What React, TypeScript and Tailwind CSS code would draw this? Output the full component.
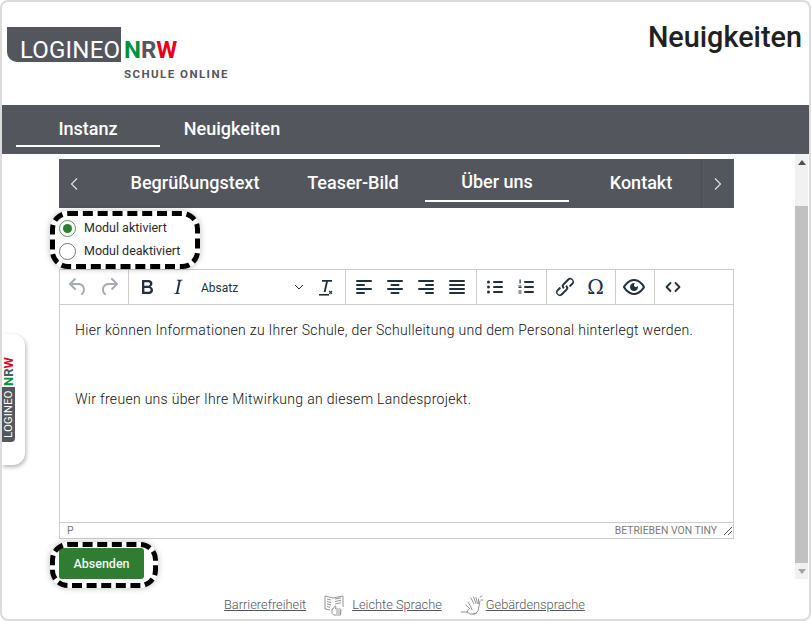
const INK = '#222f3e'

function Glyph({ d, className = '' }: { d: string; className?: string }) {
  return (
    <svg viewBox="0 0 24 24" className={`h-6 w-6 ${className}`} fill="currentColor">
      <path d={d} />
    </svg>
  )
}

function Lines({ rows }: { rows: [number, number][] }) {
  return (
    <svg viewBox="0 0 24 24" className="h-6 w-6" fill={INK}>
      {rows.map(([x, w], i) => (
        <rect key={i} x={x} y={5 + i * 4} width={w} height={2} rx={1} />
      ))}
    </svg>
  )
}

const icons = {
  undo: 'M6.4 8H12c3.7 0 6.2 2 6.8 5.1.6 2.7-.4 5.6-2.3 6.8a1 1 0 0 1-1-1.8c1.1-.6 1.8-2.7 1.4-4.6-.5-2.1-2.1-3.5-4.9-3.5H6.4l3.3 3.3a1 1 0 1 1-1.4 1.4l-5-5a1 1 0 0 1 0-1.4l5-5a1 1 0 0 1 1.4 1.4L6.4 8z',
  redo: 'M17.6 10H12c-2.8 0-4.4 1.4-4.9 3.5-.4 2 .3 4 1.4 4.6a1 1 0 1 1-1 1.8c-2-1.2-2.9-4.1-2.3-6.8.6-3 3-5.1 6.8-5.1h5.6l-3.3-3.3a1 1 0 1 1 1.4-1.4l5 5a1 1 0 0 1 0 1.4l-5 5a1 1 0 0 1-1.4-1.4l3.3-3.3z',
  bold: 'M7.8 19c-.3 0-.5 0-.6-.2l-.2-.5V5.7c0-.2 0-.4.2-.5l.6-.2h5c1.5 0 2.7.3 3.5 1 .7.6 1.1 1.4 1.1 2.5a3 3 0 0 1-.6 1.9c-.4.6-1 1-1.6 1.2.4.1.9.3 1.3.6s.8.7 1 1.2c.4.4.5 1 .5 1.6 0 1.3-.4 2.3-1.3 3-.8.7-2.1 1-3.8 1H7.8zm5-8.3c.6 0 1.2-.1 1.6-.5.4-.3.6-.7.6-1.3 0-1.1-.8-1.7-2.3-1.7H9.3v3.5h3.4zm.5 6c.7 0 1.3-.1 1.7-.4.4-.4.6-.9.6-1.5s-.2-1-.7-1.4c-.4-.3-1-.4-2-.4H9.4v3.8h4z',
  italic: 'M16.7 4.7l-.1.9h-.3c-.6 0-1 0-1.4.3-.3.3-.4.6-.5 1.1l-2.1 9.8v.6c0 .5.4.8 1.4.8h.2l-.2.8H8l.2-.8h.2c1.1 0 1.8-.5 2-1.5l2-9.8.1-.5c0-.6-.4-.8-1.4-.8h-.3l.2-.9h5.8z',
  link: 'M6.2 12.3a1 1 0 0 1 1.4 1.4l-2 2a2 2 0 1 0 2.6 2.8l4.8-4.8a1 1 0 0 0 0-1.4 1 1 0 1 1 1.4-1.3 2.9 2.9 0 0 1 0 4L9.6 20a3.9 3.9 0 0 1-5.5-5.5l2-2zm11.6-.6a1 1 0 0 1-1.4-1.4l2-2a2 2 0 1 0-2.6-2.8L11 10.3a1 1 0 0 0 0 1.4 1 1 0 1 1-1.4 1.3 2.9 2.9 0 0 1 0-4L14.4 4a3.9 3.9 0 0 1 5.5 5.5l-2 2z',
  eye: 'M3.5 12.5c.5.8 1.1 1.6 1.8 2.3 2 2 4.2 3.2 6.7 3.2s4.7-1.2 6.7-3.2a16.2 16.2 0 0 0 2.1-2.8 15.7 15.7 0 0 0-2.1-2.8c-2-2-4.2-3.2-6.7-3.2a9.3 9.3 0 0 0-6.7 3.2A16.2 16.2 0 0 0 3.2 12c0 .2.2.3.3.5zm-2.4-1l.7-1.2L4 7.8C6.2 5.4 8.9 4 12 4c3 0 5.8 1.4 8.1 3.8a18.2 18.2 0 0 1 2.8 3.7v1l-.7 1.2-2.1 2.5c-2.3 2.4-5 3.8-8.1 3.8-3 0-5.8-1.4-8.1-3.8a18.2 18.2 0 0 1-2.8-3.7 1 1 0 0 1 0-1zm12-3.3a2 2 0 1 0 2.7 2.6 4 4 0 1 1-2.7-2.6z',
}

function Btn({ children, dim }: { children: React.ReactNode; dim?: boolean }) {
  return (
    <div className={`flex h-[35px] w-[31px] items-center justify-center ${dim ? 'text-[#a7acb2]' : 'text-[#222f3e]'}`}>
      {children}
    </div>
  )
}

function Group({ children, w }: { children: React.ReactNode; w: string }) {
  return <div className={`flex h-full shrink-0 items-center border-r border-[#cccccc] pl-[2px] ${w}`}>{children}</div>
}

function Toolbar() {
  return (
    <div className="flex h-[35px] items-center border-b border-[#cccccc]">
      <Group w="w-[69px]">
        <Btn dim><Glyph d={icons.undo} /></Btn>
        <Btn dim><Glyph d={icons.redo} /></Btn>
      </Group>
      <Group w="w-[217px]">
        <Btn><Glyph d={icons.bold} /></Btn>
        <Btn><Glyph d={icons.italic} /></Btn>
        <div className="flex h-full w-[117px] items-center justify-between pl-[8px] pr-[6px] text-[12px] text-[#222f3e]">
          <span className="pt-[2px]">Absatz</span>
          <svg viewBox="0 0 10 10" className="h-[10px] w-[10px]" fill="none" stroke="#222f3e" strokeWidth="1">
            <path d="M1 3l4 4 4-4" />
          </svg>
        </div>
        <Btn>
          <svg viewBox="0 0 24 24" className="h-6 w-6" fill={INK}>
            <path d="M8 5h10v1.8h-4.1L11.6 17h-1.9l2.3-10.2H8z" />
            <rect x="5" y="19" width="10" height="1.6" />
            <path d="M15.6 15.6l1 1 1-1 .8.8-1 1 1 1-.8.8-1-1-1 1-.8-.8 1-1-1-1z" />
          </svg>
        </Btn>
      </Group>
      <Group w="w-[131px]">
        <Btn><Lines rows={[[4, 16], [4, 9], [4, 16], [4, 9]]} /></Btn>
        <Btn><Lines rows={[[4, 16], [7.5, 9], [4, 16], [7.5, 9]]} /></Btn>
        <Btn><Lines rows={[[4, 16], [11, 9], [4, 16], [11, 9]]} /></Btn>
        <Btn><Lines rows={[[4, 16], [4, 16], [4, 16], [4, 16]]} /></Btn>
      </Group>
      <Group w="w-[70px]">
        <Btn>
          <svg viewBox="0 0 24 24" className="h-6 w-6" fill={INK}>
            <rect x="10" y="6" width="10" height="2" rx="1" />
            <rect x="10" y="11" width="10" height="2" rx="1" />
            <rect x="10" y="16" width="10" height="2" rx="1" />
            <circle cx="5.5" cy="7" r="1.5" />
            <circle cx="5.5" cy="12" r="1.5" />
            <circle cx="5.5" cy="17" r="1.5" />
          </svg>
        </Btn>
        <Btn>
          <svg viewBox="0 0 24 24" className="h-6 w-6" fill={INK}>
            <rect x="10" y="6" width="10" height="2" rx="1" />
            <rect x="10" y="11" width="10" height="2" rx="1" />
            <rect x="10" y="16" width="10" height="2" rx="1" />
            <rect x="5.5" y="4.5" width="1.2" height="4" />
            <rect x="4.5" y="10.5" width="3" height="1" />
            <rect x="4.5" y="12" width="3" height="1" />
            <rect x="4.5" y="15.5" width="3" height="1" />
            <rect x="4.5" y="17.5" width="3" height="1" />
          </svg>
        </Btn>
      </Group>
      <Group w="w-[69px]">
        <Btn><Glyph d={icons.link} /></Btn>
        <Btn><span className="font-['DejaVu_Serif',serif] text-[20px] leading-none">Ω</span></Btn>
      </Group>
      <Group w="w-[39px]">
        <Btn><Glyph d={icons.eye} /></Btn>
      </Group>
      <div className="pl-[2px]">
        <Btn>
          <svg viewBox="0 0 24 24" className="h-6 w-6" fill="none" stroke={INK} strokeWidth="1.8" strokeLinecap="round" strokeLinejoin="round">
            <path d="M9.5 8L5.5 12l4 4M14.5 8l4 4-4 4" />
          </svg>
        </Btn>
      </div>
    </div>
  )
}

function Radio({ label, checked }: { label: string; checked?: boolean }) {
  return (
    <label className="flex h-[22px] items-center gap-[8px] text-[12.5px] text-[#2b2b2b]">
      <span className={`flex h-[17px] w-[17px] items-center justify-center rounded-full border ${checked ? 'border-[#4c9a50]' : 'border-[#757575]'}`}>
        {checked && <span className="h-[9px] w-[9px] rounded-full bg-[#2e7d32]" />}
      </span>
      {label}
    </label>
  )
}

function Chevron({ dir }: { dir: 'left' | 'right' }) {
  return (
    <svg viewBox="0 0 10 14" className="h-[14px] w-[10px]" fill="none" stroke="#e4e5e7" strokeWidth="1.1">
      <path d={dir === 'left' ? 'M8 1.5L2.5 7 8 12.5' : 'M2 1.5L7.5 7 2 12.5'} />
    </svg>
  )
}

function ReadingIcon() {
  return (
    <svg viewBox="0 0 22 22" className="h-[22px] w-[22px]" fill="none" stroke="#8a8a8a" strokeWidth="0.9">
      <path d="M1 2l8 2 10-2v11M1 2v13l5 1" />
      <path d="M3 5l4 1M3 7.5l4 1M3 10l4 1M3 12.5l3 .8M11 5l6-1.2M11 7.5l6-1.2M11 10l6-1.2" />
      <path d="M9 15l2-3 1 .5-.5 2.5h5l.5 1-.5 5H9.5L8 19.5V15z" fill="#fff" />
      <path d="M12 17h5M12 19h5" />
    </svg>
  )
}

function SignIcon() {
  return (
    <svg viewBox="0 0 24 22" className="h-[22px] w-[24px]" fill="none" stroke="#8a8a8a" strokeWidth="0.9" strokeLinecap="round">
      <path d="M1 18h6l3 2h5l3-3 1-5 1-5M13 20l4-1" />
      <path d="M11 4l3 6M13.5 3l2.5 6.5M16 3.5l1.5 6M18.5 5l.2 4.5" />
      <path d="M8 8l3 5 1 3M6 11l4 4M9 15l-2 3" />
      <path d="M20 3l2-1M21 6l2 0" />
    </svg>
  )
}

export default function App() {
  return (
    <div className="relative flex h-[621px] w-[811px] flex-col overflow-hidden rounded-lg border-2 border-[#dcdcdc] bg-white font-['Roboto',sans-serif]">
      {/* Header */}
      <header className="flex h-[103px] shrink-0 justify-between pl-[5px] pr-[7px]">
        <div className="pt-[25px]">
          <div className="flex items-end">
            <div className="flex h-[35px] w-[114px] items-end rounded-bl-[10px] bg-[#53565d] pl-[13px]">
              <span className="translate-y-[2px] text-[24px] leading-[27px] tracking-[0.2px] text-white">LOGINEO</span>
            </div>
            <div className="translate-y-[2px] pl-[3px] text-[24px] font-bold leading-[27px]">
              <span className="text-[#00913f]">N</span>
              <span className="text-[#53565d]">R</span>
              <span className="text-[#e3001b]">W</span>
            </div>
          </div>
          <div className="mt-[5px] pl-[117px] text-[11.5px] font-bold leading-[14px] tracking-[1.45px] text-[#53565d]">SCHULE ONLINE</div>
        </div>
        <h1 className="pt-[18px] text-[28.8px] font-medium leading-[34px] text-[#212121]">Neuigkeiten</h1>
      </header>

      {/* Main nav */}
      <nav className="flex h-[49px] shrink-0 bg-[#53565d] pl-[14px] text-[18px] font-medium text-white">
        <div className="flex h-[42px] w-[144px] items-center justify-center border-b-2 border-white pt-[7px]">Instanz</div>
        <div className="flex h-[42px] w-[144px] items-center justify-center pt-[5px]">Neuigkeiten</div>
      </nav>

      {/* Scroll area */}
      <div className="flex min-h-0 flex-1">
        <main className="w-[793px] shrink-0 pl-[57px] pt-[5px]">
          <div className="w-[675px]">
            <div className="flex h-[49px] items-stretch bg-[#53565d] text-[18px] font-medium text-white">
              <div className="flex w-[50px] items-center pl-[10px]"><Chevron dir="left" /></div>
              <div className="flex w-[172px] items-center justify-center pb-[2px]">Begrüßungstext</div>
              <div className="flex w-[144px] items-center justify-center pb-[2px]">Teaser-Bild</div>
              <div className="flex h-[43px] w-[144px] items-center justify-center border-b-2 border-white pt-[4px]">Über uns</div>
              <div className="flex w-[132px] items-center justify-center pb-[2px] pl-[12px]">Kontakt</div>
              <div className="flex w-[33px] items-center justify-center border-l border-[#4a4d53]"><Chevron dir="right" /></div>
            </div>

            <div className="pb-[7px] pt-[9px]">
              <Radio label="Modul aktiviert" checked />
              <div className="mt-[1px]">
                <Radio label="Modul deaktiviert" />
              </div>
            </div>

            {/* Editor */}
            <div className="flex h-[270px] flex-col border border-[#cccccc]">
              <Toolbar />
              <div className="flex-1 px-[15px] pt-[15px] text-[14px] font-light leading-[20px] tracking-[0.3px] text-[#111111]">
                <p>Hier können Informationen zu Ihrer Schule, der Schulleitung und dem Personal hinterlegt werden.</p>
                <p className="mt-[49px]">Wir freuen uns über Ihre Mitwirkung an diesem Landesprojekt.</p>
              </div>
              <div className="flex h-[16px] items-center justify-between border-t border-[#cccccc] pl-[7px] text-[10.4px] text-[#7a7a7a]">
                <span className="pt-[1px]">P</span>
                <div className="flex items-center gap-[6px]">
                  <span className="pt-[1px]">BETRIEBEN VON TINY</span>
                  <svg viewBox="0 0 10 10" className="h-[10px] w-[10px]" stroke="#555" strokeWidth="1">
                    <path d="M1 9l8-8M5 9l4-4" />
                  </svg>
                </div>
              </div>
            </div>

            <button className="mt-[9px] flex h-[31px] w-[85px] items-center justify-center rounded-[3px] bg-[#2e7d32] pt-[1px] text-[12.5px] font-medium text-[#f2f7f2]">Absenden</button>
          </div>
        </main>

        {/* Scrollbar */}
        <div className="flex h-[425px] w-[13px] flex-col items-center bg-[#f1f1f1]">
          <div className="flex h-[17px] shrink-0 items-center justify-center">
            <div className="h-0 w-0 border-x-[4px] border-b-[5px] border-x-transparent border-b-[#505050]" />
          </div>
          <div className="h-[35px] shrink-0" />
          <div className="w-full flex-1 bg-[#c1c1c1]" />
          <div className="flex h-[16px] shrink-0 items-center justify-center">
            <div className="h-0 w-0 border-x-[4px] border-t-[5px] border-x-transparent border-t-[#a3a3a3]" />
          </div>
        </div>
      </div>

      {/* Footer */}
      <footer className="absolute bottom-0 left-[222px] flex h-[29px] items-center text-[12.8px] font-light text-[#53565d] underline">
        <span>Barrierefreiheit</span>
        <span className="ml-[18px]"><ReadingIcon /></span>
        <span className="ml-[6px]">Leichte Sprache</span>
        <span className="ml-[18px]"><SignIcon /></span>
        <span className="ml-[2px]">Gebärdensprache</span>
      </footer>

      {/* Side widget */}
      <aside className="absolute left-0 top-[332px] flex h-[131px] w-[23px] flex-col items-start rounded-r-xl bg-white pt-[23px] shadow-[1px_2px_4px_rgba(0,0,0,0.3)]">
        <div className="flex rotate-180 [writing-mode:vertical-rl]">
          <div className="flex h-[55px] w-[13px] items-center justify-center rounded-tl-[4px] bg-[#53565d] text-[11.5px] leading-none text-white">LOGINEO</div>
          <div className="pt-[1px] text-[13px] font-bold leading-[13px]">
            <span className="text-[#00913f]">N</span>
            <span className="text-[#53565d]">R</span>
            <span className="text-[#e3001b]">W</span>
          </div>
        </div>
      </aside>

      {/* Dashed highlights */}
      <div className="pointer-events-none absolute left-[48px] top-[209px] h-[58px] w-[150px] rounded-[18px] border-[5px] border-dashed border-black shadow-[0_0_6px_rgba(0,0,0,0.25)]" />
      <div className="pointer-events-none absolute left-[48px] top-[540px] h-[46px] w-[108px] rounded-[18px] border-[5px] border-dashed border-black shadow-[0_0_6px_rgba(0,0,0,0.25)]" />
    </div>
  )
}
